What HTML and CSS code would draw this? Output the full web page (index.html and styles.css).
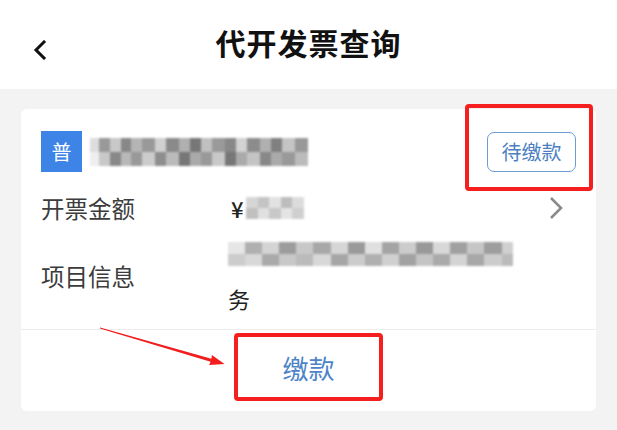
FILE: index.html
```html
<!DOCTYPE html>
<html lang="zh-CN">
  <head>
    <meta charset="UTF-8" />
    <meta name="viewport" content="width=device-width, initial-scale=1.0" />
    <title>代开发票查询</title>
    <link rel="stylesheet" href="styles.css">
  </head>
  <body>
    <div class="page">
      <header class="nav">
        <svg class="nav-back" width="16" height="20" viewBox="0 0 16 20">
          <path d="M12 2 L4 10 L12 18" fill="none" stroke="#111" stroke-width="3" stroke-linecap="square" />
        </svg>
        <h1 class="nav-title">代开发票查询</h1>
      </header>

      <div class="card">
        <div class="card-body">
          <div class="card-head">
            <span class="badge">普</span>
            <span class="mosaic mosaic-name"></span>
            <span class="status">待缴款</span>
          </div>

          <div class="row row-amount">
            <span class="row-label">开票金额</span>
            <span class="row-value">
              <span class="yen">¥</span>
              <span class="mosaic mosaic-amount"></span>
            </span>
            <svg class="row-arrow" width="16" height="24" viewBox="0 0 16 24">
              <path d="M3 2 L13 12 L3 22" fill="none" stroke="#8a8a8a" stroke-width="2.6" />
            </svg>
          </div>

          <div class="row row-info">
            <span class="row-label">项目信息</span>
            <div class="row-value info-lines">
              <div class="info-line"><span class="mosaic mosaic-info"></span></div>
              <div class="info-line">务</div>
            </div>
          </div>
        </div>

        <div class="card-foot">
          <div class="pay-box">缴款</div>
        </div>
      </div>
    </div>

    <div class="mark mark-status"></div>
    <svg class="mark-arrow" width="617" height="430" viewBox="0 0 617 430">
      <polygon points="100.1,327.6 211.4,358.8 211.9,355.1 224.5,364 209.1,365.1 210.6,361.8 99.9,328.4" fill="#f21d1d" />
    </svg>
  </body>
</html>
```

FILE: styles.css
```css
* {
  padding: 0;
  margin: 0;
  box-sizing: border-box;
}

body {
  width: 617px;
  height: 430px;
  overflow: hidden;
  background-color: #f3f3f3;
  font-family: "Noto Sans CJK SC", "Noto Sans", sans-serif;
  color: #333;
  position: relative;
}

.nav {
  height: 89px;
  background-color: #fff;
  display: flex;
  align-items: center;
  justify-content: center;
  position: relative;
}

.nav-back {
  position: absolute;
  left: 32px;
  top: 40px;
}

.nav-title {
  font-size: 30px;
  font-weight: 700;
  color: #111;
  letter-spacing: 1px;
  margin-top: -6px;
}

.card {
  margin: 20px 21px 0;
  background-color: #fff;
  border-radius: 6px;
}

.card-body {
  padding: 22px 20px 9px;
}

.card-head {
  display: flex;
  align-items: center;
  height: 41px;
}

.badge {
  width: 41px;
  height: 41px;
  background-color: #3d84e6;
  color: #fff;
  font-size: 20px;
  display: flex;
  align-items: center;
  justify-content: center;
}

.mosaic {
  display: inline-block;
  filter: blur(1.1px);
}

.mosaic-name {
  width: 218px;
  height: 28px;
  margin-left: 8px;
  background:
    linear-gradient(90deg, #ddd 0 4%, #999 4% 9%, #c8c8c8 9% 14%, #888 14% 19%, #b5b5b5 19% 24%, #999 24% 30%, #d0d0d0 30% 35%, #8a8a8a 35% 41%, #b0b0b0 41% 46%, #777 46% 51%, #c0c0c0 51% 56%, #9a9a9a 56% 62%, #888 62% 67%, #d2d2d2 67% 72%, #8c8c8c 72% 78%, #b0b0b0 78% 83%, #808080 83% 88%, #c4c4c4 88% 94%, #999 94% 100%) top / 100% 50% no-repeat,
    linear-gradient(90deg, #eee 0 4%, #c8c8c8 4% 9%, #888 9% 14%, #b8b8b8 14% 19%, #999 19% 24%, #ccc 24% 30%, #8e8e8e 30% 35%, #bbb 35% 41%, #777 41% 46%, #aaa 46% 51%, #999 51% 56%, #c8c8c8 56% 62%, #777 62% 67%, #aaa 67% 72%, #c4c4c4 72% 78%, #888 78% 83%, #aaa 83% 88%, #999 88% 94%, #bbb 94% 100%) bottom / 100% 50% no-repeat;
}

.status {
  margin-left: auto;
  width: 89px;
  height: 40px;
  border: 1.5px solid #6d9bd4;
  border-radius: 7px;
  color: #4b7fc2;
  font-size: 20px;
  display: flex;
  align-items: center;
  justify-content: center;
}

.row {
  display: flex;
  align-items: center;
}

.row-label {
  width: 187px;
  flex-shrink: 0;
  font-size: 23.5px;
  color: #3c3c3c;
}

.row-amount {
  margin-top: 16px;
  height: 40px;
}

.row-amount .row-value {
  display: flex;
  align-items: center;
  margin-left: 3px;
}

.yen {
  font-size: 22px;
  color: #222;
  font-weight: 500;
}

.mosaic-amount {
  width: 58px;
  height: 22px;
  margin-left: 2px;
  background:
    linear-gradient(90deg, #d6d6d6 0 20%, #c4c4c4 20% 40%, #e2e2e2 40% 60%, #bdbdbd 60% 80%, #dcdcdc 80% 100%) top / 100% 50% no-repeat,
    linear-gradient(90deg, #c0c0c0 0 20%, #e0e0e0 20% 40%, #c8c8c8 40% 60%, #e4e4e4 60% 80%, #cfcfcf 80% 100%) bottom / 100% 50% no-repeat;
}

.row-arrow {
  margin-left: auto;
  margin-right: 12px;
}

.row-info {
  margin-top: 4px;
}

.info-lines {
  display: flex;
  flex-direction: column;
}

.info-line {
  height: 44px;
  display: flex;
  align-items: center;
  font-size: 22px;
  color: #222;
}

.mosaic-info {
  width: 285px;
  height: 24px;
  background:
    linear-gradient(90deg, #e6e6e6 0 6%, #b0b0b0 6% 12%, #d4d4d4 12% 18%, #9c9c9c 18% 24%, #c8c8c8 24% 30%, #a8a8a8 30% 36%, #d6d6d6 36% 42%, #9a9a9a 42% 48%, #e0e0e0 48% 54%, #a4a4a4 54% 60%, #ccc 60% 66%, #999 66% 72%, #d8d8d8 72% 78%, #a0a0a0 78% 84%, #c6c6c6 84% 90%, #9e9e9e 90% 96%, #d0d0d0 96% 100%) top / 100% 50% no-repeat,
    linear-gradient(90deg, #ccc 0 6%, #d8d8d8 6% 12%, #aaa 12% 18%, #c8c8c8 18% 24%, #bbb 24% 30%, #d8d8d8 30% 36%, #a6a6a6 36% 42%, #ccc 42% 48%, #b0b0b0 48% 54%, #d0d0d0 54% 60%, #a2a2a2 60% 66%, #c4c4c4 66% 72%, #aaa 72% 78%, #d4d4d4 78% 84%, #a8a8a8 84% 90%, #ccc 90% 96%, #bbb 96% 100%) bottom / 100% 50% no-repeat;
}

.card-foot {
  border-top: 1px solid #ececec;
  padding: 3px 0 10px;
  display: flex;
  justify-content: center;
}

.pay-box {
  width: 149px;
  height: 68px;
  border: 4px solid #f51f1f;
  border-radius: 4px;
  color: #4d84c8;
  font-size: 26px;
  display: flex;
  align-items: center;
  justify-content: center;
}

.mark {
  position: absolute;
  border: 4px solid #f51f1f;
  border-radius: 4px;
}

.mark-status {
  left: 465px;
  top: 104px;
  width: 128px;
  height: 87px;
}

.mark-arrow {
  position: absolute;
  left: 0;
  top: 0;
}
```
